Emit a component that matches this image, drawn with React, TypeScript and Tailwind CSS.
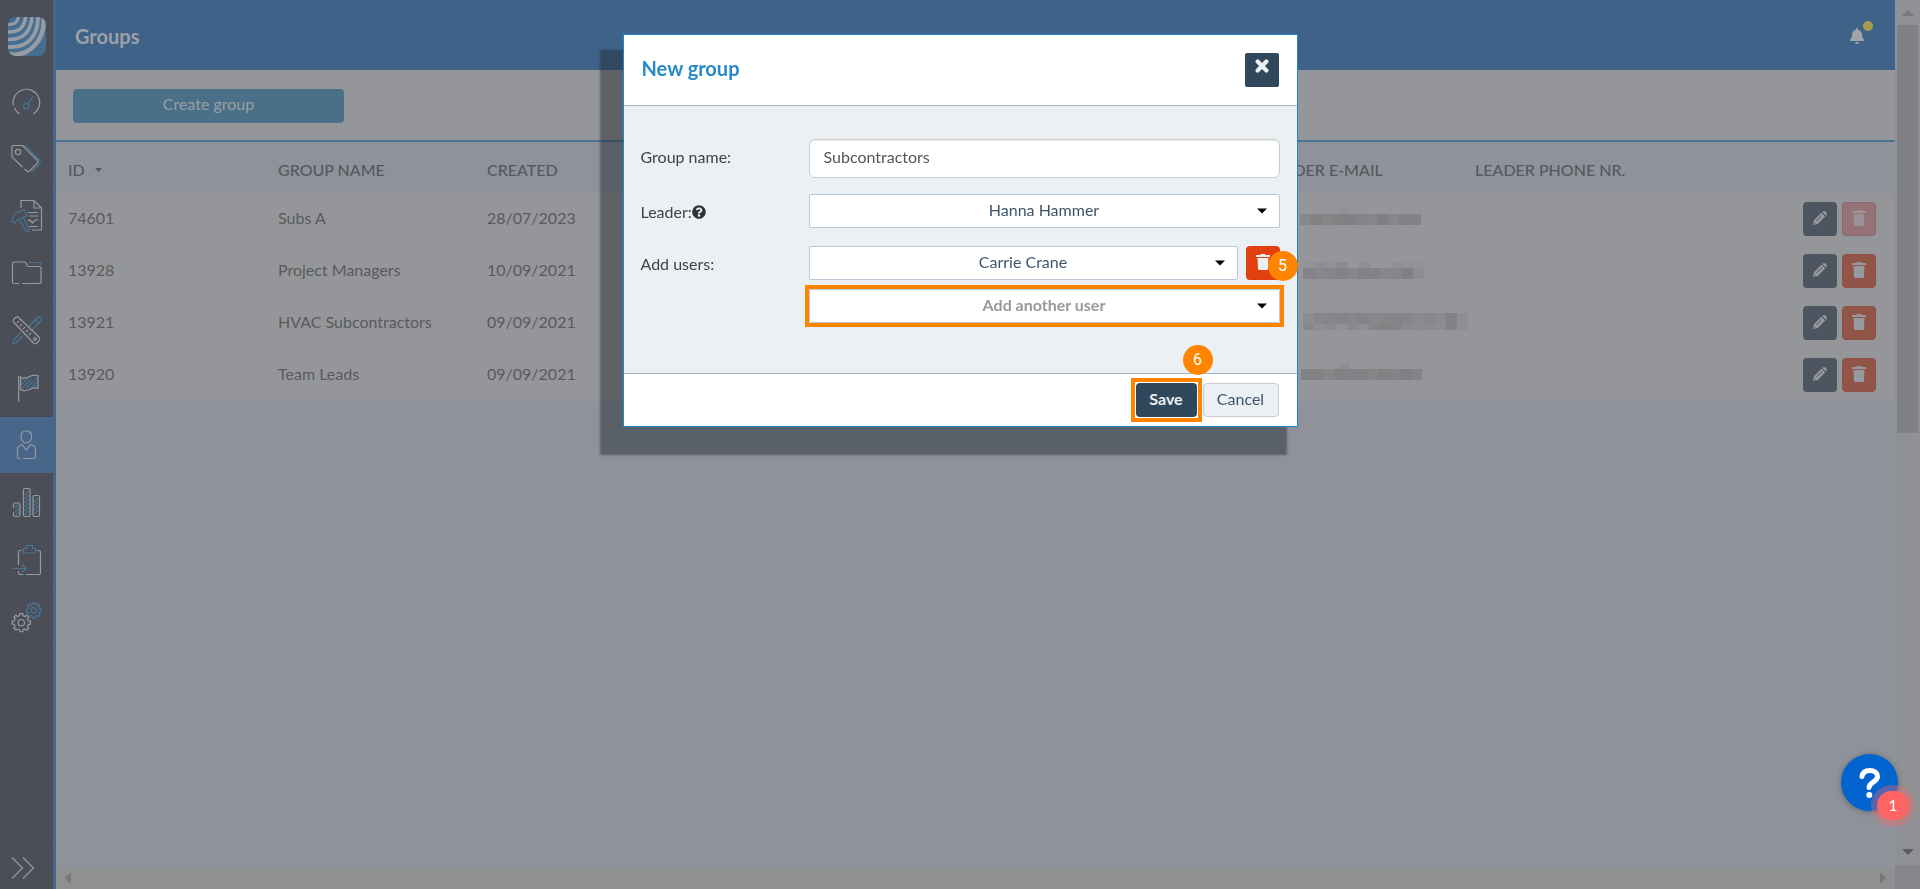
import React, { useState } from 'react';
import { FaBell, FaQuestionCircle } from 'react-icons/fa';

interface Group {
  id: string;
  name: string;
  created: string;
  locked?: boolean;
  mosaic: Band[];
}

interface Band {
  x: number;
  y: number;
  h: number;
  // opacity of each 11px block, left to right
  cells: number[];
}

const GROUPS: Group[] = [
  {
    id: '74601',
    name: 'Subs A',
    created: '28/07/2023',
    locked: true,
    mosaic: [
      { x: 40, y: 0, h: 6, cells: [0.2] },
      { x: 1, y: 6, h: 11, cells: [0.7, 0.9, 0.75, 0.9, 0.95, 0.8, 0.75, 1, 0.7, 0.9, 0.85] },
    ],
  },
  {
    id: '13928',
    name: 'Project Managers',
    created: '10/09/2021',
    mosaic: [
      { x: 5, y: 2, h: 6, cells: [0.1, 0.4, 0.1, 0.5, 0, 0.35, 0, 0, 0.25, 0.1, 0.1] },
      { x: 4, y: 8, h: 11, cells: [0.8, 0.7, 0.75, 0.85, 0.7, 0.85, 0.9, 0.7, 0.75, 1, 0.4] },
    ],
  },
  {
    id: '13921',
    name: 'HVAC Subcontractors',
    created: '09/09/2021',
    mosaic: [
      { x: 4, y: 1, h: 11, cells: [0.4, 0.7, 0.75, 0.8, 0.65, 0.8, 0.7, 0.75, 0.8, 0.75, 0.5, 0.7, 0.5, 0.9, 0.3] },
      { x: 4, y: 12, h: 6, cells: [0.7, 0.3, 0.5, 0.2, 0.6, 0.3, 0.75, 0.9, 0.8, 0.5, 0.4, 0.5, 0.4, 0.9, 0.3] },
    ],
  },
  {
    id: '13920',
    name: 'Team Leads',
    created: '09/09/2021',
    mosaic: [
      { x: 40, y: 0, h: 5, cells: [0.35] },
      { x: 2, y: 5, h: 11, cells: [0.9, 0.95, 0.75, 0.95, 0.85, 0.9, 0.75, 0.9, 0.8, 1, 0.8] },
    ],
  },
];

const LINE = '#9699a0';
const BLUE = '#467596';

// Outline of a cog with eight teeth
function cog(cx: number, cy: number, outer: number, inner: number) {
  const pts: string[] = [];
  for (let i = 0; i < 8; i++) {
    const a = (i * Math.PI) / 4;
    [[-0.24, inner], [-0.17, outer], [0.17, outer], [0.24, inner]].forEach(([d, r]) => {
      pts.push(`${(cx + r * Math.cos(a + d)).toFixed(2)} ${(cy + r * Math.sin(a + d)).toFixed(2)}`);
    });
  }
  return `M${pts.join('L')}Z`;
}

const NAV: { label: string; active?: boolean; icon: React.ReactNode }[] = [
  {
    label: 'Dashboard',
    icon: (
      <>
        <path d="M11.5 31A13.3 13.3 0 0 1 6.5 25M5.4 22.5A13.3 13.3 0 1 1 25.2 31" />
        <g stroke={BLUE}>
          <circle cx="18.3" cy="23.2" r="2.7" />
          <path d="M20 21L25.2 13" />
        </g>
      </>
    ),
  },
  {
    label: 'Tags',
    icon: (
      <>
        <path d="M14.5 27L4 17V6.5L5 5.5H14.5L29.5 20.5Q30.5 21.7 29.5 23L21.5 31Q20.3 31.8 19 31L16.5 29" />
        <circle cx="10" cy="12" r="2.6" />
        <path stroke={BLUE} d="M17 5.5L31.5 20Q33 22 31.5 24L23.5 32" />
      </>
    ),
  },
  {
    label: 'Tenders',
    icon: (
      <>
        <path d="M13 10V2.5H26L33.5 10V32H24M26 2.5V10H33.5M20 14.5H30M21 18H30M19.5 23L22 22L24.5 25L27 22L30 22M21 28.5H30" />
        <path stroke={BLUE} d="M4 23.5L6.5 16L16 11.5L19 18L9.5 21.5L7 25ZM11.5 22L18.5 34L21.5 32.5L15.5 20" />
      </>
    ),
  },
  {
    label: 'Documents',
    icon: (
      <>
        <path d="M11 28.5H6Q4.5 28.5 4.5 27V9Q4.5 7 6.5 7H16.5Q18 7 18.4 9Q18.8 11.5 20.5 11.5H31Q33 11.5 33 13.5V26.5Q33 28.5 31 28.5H14" />
        <path stroke={BLUE} d="M21 7.5H31Q33 7.5 33 10" />
      </>
    ),
  },
  {
    label: 'Tools',
    icon: (
      <>
        <path stroke={BLUE} d="M15 23.5L8.5 30.5L5 32L6 27.5L13 20.5M21 14.5L29 6Q31 4 33 6Q34 8 32.5 9.5L24 18M27.5 7.5L31.5 11.5" />
        <path d="M5.5 10Q4.5 8.5 6 7L8.5 5Q10 4.5 11 6L31 25Q32.5 27 31 29L29 31Q27 32.5 25.5 31ZM9 11L11 9M12 14L14 12M15 17L17 15M18 20L20 18M21 23L23 21" />
        <circle cx="27" cy="27" r="1.4" />
      </>
    ),
  },
  {
    label: 'Milestones',
    icon: (
      <>
        <path
          stroke={BLUE}
          d="M13 11L17 7M13 15L20 8M14 18.5L24 8.5M18 18.5L29 7.5M23 17.5L29 11.5M26 18L29 15"
        />
        <path d="M10.7 32V6M12.5 7Q17 9.5 20.5 7Q25 4.5 30 5.5V18.5Q26 17 22.5 19Q17 22 12.5 19.5Z" />
      </>
    ),
  },
  {
    label: 'Users',
    active: true,
    icon: (
      <path d="M18.3 4C14.5 4 13 6.8 13 9.7C13 13 15.5 16 18.3 16S23.7 13 23.7 9.7C23.7 6.8 22 4 18.3 4ZM12.5 31.5H11Q9.5 31.5 9.5 30V22.5Q9.5 19.5 12 18.5L14 17.5L18.3 23L22.7 17.5L25 18.5Q27.5 19.5 27.5 22.5V30Q27.5 31.5 26 31.5H15" />
    ),
  },
  {
    label: 'Reports',
    icon: (
      <>
        <path stroke={BLUE} d="M7 24L11 20M7 28L11 24M8 31L11 28M17 11L20.5 7M17 15L20.5 11M17 19L20.5 15M17 23L20.5 19M17 27L20.5 23M17 31L20.5 27M26 18L30 14M26 22L30 18M26 26L30 22M26 30L30 26" />
        <path d="M5.5 24V20.5Q5.5 19 7 19H10.5Q12 19 12 20.5V31Q12 32.5 10.5 32.5H7Q5.5 32.5 5.5 31V28" />
        <rect x="15.5" y="4.5" width="6.5" height="28" rx="1.5" />
        <rect x="25" y="11.5" width="6.5" height="21" rx="1.5" />
      </>
    ),
  },
  {
    label: 'Submissions',
    icon: (
      <>
        <path d="M13.5 8.5H12Q10.5 8.5 10.5 10V23M10.5 29V31Q10.5 32.5 12 32.5H15M18 32.5H31Q32.5 32.5 32.5 31V10Q32.5 8.5 31 8.5H29.5" />
        <path stroke={BLUE} d="M15.5 11V6.5H18.5V3.5H24.5V6.5H27.5V11ZM4.5 26.5H18M14 22.5L18 26.5L14 30.5" />
      </>
    ),
  },
  {
    label: 'Settings',
    icon: (
      <>
        <path d={cog(13.3, 23.7, 9.2, 7.2)} />
        <circle cx="13.3" cy="23.7" r="3.2" />
        <g stroke={BLUE}>
          <path d={cog(25.7, 11.3, 7.6, 6)} />
          <circle cx="25.7" cy="11.3" r="2.7" />
        </g>
      </>
    ),
  },
];

function Logo() {
  return (
    <svg width="38" height="39" viewBox="0 0 38 39" className="overflow-hidden rounded-lg bg-[#456e93]" aria-hidden="true">
      <g fill="none" stroke="#989ba1">
        <path strokeWidth="3" d="M0 7.5Q9 8 10.5 0" />
        <path strokeWidth="3.5" d="M0 15Q16 15.500 17.5 0" />
        <path strokeWidth="3.5" d="M0 22.5Q22 23 24 0" />
        <path strokeWidth="4" d="M0 30Q15 31 23 22Q30 14 30 0" />
        <path strokeWidth="4.5" d="M0 37Q15 40 26 29Q37 18 35.5 0" />
      </g>
    </svg>
  );
}

function TrashIcon() {
  return (
    <svg width="14" height="16" viewBox="0 0 14 16" fill="currentColor" aria-hidden="true">
      <path d="M5 0H9L9.5 1H13.5Q14 1 14 1.5V3H0V1.5Q0 1 .5 1H4.5ZM1.5 4H12.5L12 14.5Q11.9 16 10.5 16H3.5Q2.1 16 2 14.5Z" />
    </svg>
  );
}

function PencilIcon() {
  return (
    <svg width="14" height="14" viewBox="0 0 14 14" aria-hidden="true">
      <path fill="currentColor" d="M0 14L1 9L8.5 1.8L12.2 5.5L4.8 13ZM9.3 1L10 .4Q11.2-.4 12.4 .6L13.4 1.6Q14.4 2.8 13.5 4L13 4.7Z" />
      <path stroke="#4d5561" strokeWidth="1" d="M3.2 10.2L8.8 4.7M1.2 11.6L2.4 12.8" />
    </svg>
  );
}

function Mosaic({ bands }: { bands: Band[] }) {
  return (
    <svg width="180" height="22" viewBox="0 0 180 22" className="block" aria-hidden="true">
      {bands.map((b, bi) =>
        b.cells.map((o, i) => (
          <rect key={`${bi}-${i}`} x={b.x + i * 11} y={b.y} width="11" height={b.h} fill="#7f8083" opacity={o} />
        ))
      )}
    </svg>
  );
}

function Caret() {
  return (
    <svg width="10" height="6" viewBox="0 0 10 6" className="pointer-events-none absolute right-[13px] top-1/2 -translate-y-1/2" aria-hidden="true">
      <path d="M0 0.5H10L5 5.5Z" fill="#000" />
    </svg>
  );
}

function Picker({ id, label, value, muted }: { id: string; label?: string; value: string; muted?: boolean }) {
  return (
    <div className="relative flex-1">
      <select
        id={id}
        aria-label={label}
        className={`block h-[34px] w-full appearance-none rounded-xs border border-[#bcc8d4] bg-white px-3 pb-[2px] text-center text-base ${
          muted ? 'font-bold text-[#999999]' : 'text-[#3f5468]'
        }`}
      >
        <option>{value}</option>
      </select>
      <Caret />
    </div>
  );
}

function StepBadge({ n, className }: { n: number; className: string }) {
  return (
    <span className={`absolute grid size-[30px] place-items-center rounded-full bg-[#ff8500] font-['Roboto',sans-serif] text-base text-white ${className}`}>
      {n}
    </span>
  );
}

function Sidebar() {
  return (
    <aside className="flex w-14 shrink-0 flex-col border-r-[3px] border-[#48658a] bg-[#4c4e57]">
      <a href="#home" aria-label="Home" className="flex h-[73px] shrink-0 justify-center pt-[17px]">
        <Logo />
      </a>
      <nav className="grid h-[573px] shrink-0 grid-rows-10">
        {NAV.map((item) => (
          <a
            key={item.label}
            href={`#${item.label.toLowerCase()}`}
            aria-label={item.label}
            className={`flex items-center justify-center border-b border-[#494a52] ${item.active ? 'bg-[#48658a]' : ''}`}
          >
            <svg width="37" height="36" viewBox="0 0 37 36" fill="none" stroke={LINE} strokeWidth="1.2">
              {item.icon}
            </svg>
          </a>
        ))}
      </nav>
      <button aria-label="Expand menu" className="mt-auto flex h-[45px] items-center border-t border-[#494a52] pt-[2px] pl-[11px]">
        <svg width="24" height="24" viewBox="0 0 24 24" fill="none" stroke={LINE} strokeWidth="1.2">
          <path d="M1 1.5L11.5 12L1 22.5M12 1.5L22.5 12L12 22.5" />
        </svg>
      </button>
    </aside>
  );
}

function GroupsTable() {
  return (
    <table className="w-full table-fixed text-left text-base text-[#595a5d]">
      <colgroup>
        <col className="w-[209px]" />
        <col className="w-[209px]" />
        <col className="w-[209px]" />
        <col className="w-[570px]" />
        <col className="w-[209px]" />
        <col className="w-[209px]" />
        <col />
      </colgroup>
      <thead>
        <tr className="h-[51px] text-[#55585d]">
          <th className="pt-1 pl-3 font-medium">
            <span className="flex items-center gap-[10px]">
              ID
              <svg width="7" height="4" viewBox="0 0 7 4" aria-hidden="true">
                <path d="M0 0H7L3.5 4Z" fill="currentColor" />
              </svg>
            </span>
          </th>
          <th className="pt-1 pl-[13px] font-medium">GROUP NAME</th>
          <th className="pt-1 pl-[13px] font-medium">CREATED</th>
          <td />
          <th className="pt-1 pl-3 font-medium whitespace-nowrap">LEADER E-MAIL</th>
          <th className="pt-1 pl-[13px] font-medium whitespace-nowrap">LEADER PHONE NR.</th>
          <td />
        </tr>
      </thead>
      <tbody className="bg-[#959699]">
        {GROUPS.map((g) => (
          <tr key={g.id} className="h-[52px]">
            <td className="pb-[3px] pl-3">{g.id}</td>
            <td className="pb-[3px] pl-[13px]">{g.name}</td>
            <td className="pb-[3px] pl-[13px]">{g.created}</td>
            <td />
            <td className="pl-[46px]">
              <Mosaic bands={g.mosaic} />
            </td>
            <td />
            <td className="pr-[17px]">
              <div className="flex justify-end gap-[5px]">
                <button aria-label={`Edit ${g.name}`} className="grid size-[34px] place-items-center rounded-sm bg-[#4d5561] pb-[2px] text-[#97999f]">
                  <PencilIcon />
                </button>
                <button
                  aria-label={`Delete ${g.name}`}
                  disabled={g.locked}
                  className={`grid size-[34px] place-items-center rounded-sm border pb-[2px] ${
                    g.locked ? 'border-[#8c676c] bg-[#947277] text-[#9a9298]' : 'border-[#8a4f46] bg-[#915547] text-[#9799a0]'
                  }`}
                >
                  <TrashIcon />
                </button>
              </div>
            </td>
          </tr>
        ))}
      </tbody>
    </table>
  );
}

function NewGroupDialog() {
  const [name, setName] = useState('Subcontractors');

  return (
    <div className="fixed inset-0 z-10 flex items-start justify-center pt-[34px]">
      <section
        role="dialog"
        aria-labelledby="dialog-title"
        className="w-[675px] border border-[#2185c9] bg-white shadow-[-17px_22px_2px_6px_rgba(38,46,54,0.5)]"
      >
        <header className="flex h-[71px] items-start justify-between border-b border-[#a3b6c6] pt-[18px] pr-[18px] pl-[18px]">
          <h2 id="dialog-title" className="text-xl leading-[30px] font-bold text-[#2689c9]">
            New group
          </h2>
          <button aria-label="Close" className="flex size-[34px] justify-center rounded-xs bg-[#31475b] pt-[6px] text-[#ebf0f4]">
            <svg width="14" height="14" viewBox="0 0 14 14" fill="none" stroke="currentColor" strokeWidth="4.2" strokeLinecap="round">
              <path d="M2.6 2.6L11.4 11.4M11.4 2.6L2.6 11.4" />
            </svg>
          </button>
        </header>

        <form className="grid h-[267px] grid-cols-[168px_1fr] content-start bg-[#ebf0f4] pt-[33px] pr-[17px] pl-[17px] text-base text-[#3f4347]">
          <label htmlFor="group-name" className="leading-9">
            Group name:
          </label>
          <input
            id="group-name"
            value={name}
            onChange={(e) => setName(e.target.value)}
            className="mb-4 h-[39px] rounded-md border border-[#cccccc] bg-white px-3.5 pb-1 text-[#555555] shadow-[inset_0_1px_1px_rgba(0,0,0,0.075)]"
          />

          <label htmlFor="leader" className="flex items-center pb-4">
            Leader:
            <FaQuestionCircle className="size-3.5 text-[#333333]" />
          </label>
          <div className="mb-[18px] flex">
            <Picker id="leader" value="Hanna Hammer" />
          </div>

          <label htmlFor="user-1" className="leading-9">
            Add users:
          </label>
          <div className="grid gap-[9px]">
            <div className="relative flex gap-2">
              <Picker id="user-1" value="Carrie Crane" />
              <button type="button" aria-label="Remove user" className="flex size-[34px] justify-center rounded-sm bg-[#e2400f] pt-2 text-[#ebf0f4]">
                <TrashIcon />
              </button>
              <StepBadge n={5} className="top-[5px] -right-[18px]" />
            </div>
            <div className="flex outline-4 outline-[#ff8500]">
              <Picker id="user-2" label="Add another user" value="Add another user" muted />
            </div>
          </div>
        </form>

        <footer className="flex h-[53px] items-start justify-end gap-[6px] border-t border-[#a3b6c6] pt-[9px] pr-[18px]">
          <div className="relative outline-4 outline-offset-1 outline-[#ff8500]">
            <button className="block h-[34px] w-[61px] rounded-sm bg-[#31475b] pb-[3px] text-base font-bold text-[#ebf0f4]">Save</button>
            <StepBadge n={6} className="-top-[38px] -right-[16px]" />
          </div>
          <button className="h-[34px] w-[76px] rounded-sm border border-[#cccccc] bg-[#ebf0f4] pb-[3px] text-base text-[#3f5468]">Cancel</button>
        </footer>
      </section>
    </div>
  );
}

function Arrow({ d, className }: { d: string; className?: string }) {
  return (
    <svg width="12" height="12" viewBox="0 0 12 12" fill="currentColor" className={className} aria-hidden="true">
      <path d={d} />
    </svg>
  );
}

export default function App() {
  return (
    <div className="flex h-screen overflow-hidden bg-[#8f929a] font-['Lato',sans-serif]">
      <Sidebar />

      <div className="flex min-w-0 flex-1 flex-col">
        <header className="flex h-[70px] shrink-0 items-center justify-between bg-[#3f6288] pt-[2px] pr-[30px] pl-[19px]">
          <h1 className="text-xl font-bold text-[#9da1a7]">Groups</h1>
          <button aria-label="Notifications" className="relative text-[#a0a3a9]">
            <FaBell className="size-4" />
            <span className="absolute -top-[7px] -right-[8px] size-[10px] rounded-full bg-[#a59b4c]" />
          </button>
        </header>
        <div className="flex h-[72px] shrink-0 items-start border-b-2 border-[#4a738f] bg-[#959699] pt-[19px] pl-[17px]">
          <button className="h-[34px] w-[271px] rounded-sm bg-[#4a6f88] pb-1 text-base text-[#9b9fa4]">Create group</button>
        </div>
        <main className="min-h-0 flex-1 overflow-hidden pr-[2px]">
          <GroupsTable />
        </main>
        <div className="flex h-[22px] shrink-0 items-center justify-between bg-[#8f9092] px-[6px] text-[#77787b]">
          <Arrow d="M9 0V12L3 6Z" />
          <Arrow d="M3 0V12L9 6Z" />
        </div>
      </div>

      {/* Scroll track */}
      <div className="flex w-[25px] shrink-0 flex-col items-center bg-[#909194]">
        <Arrow d="M0 9H12L6 3Z" className="my-[6px] mt-[7px] shrink-0 text-[#77787b]" />
        <div className="h-[408px] w-[21px] bg-[#808184]" />
        <Arrow d="M0 3H12L6 9Z" className="mt-auto mb-[7px] shrink-0 text-[#595b5e]" />
        <div className="h-[24px] w-full shrink-0 bg-[#86878b]" />
      </div>

      <NewGroupDialog />

      <button
        aria-label="Help"
        className="fixed right-[22px] bottom-[78px] z-20 grid size-[57px] place-items-center rounded-full bg-[#0265cf] shadow-[0_1px_6px_rgba(0,0,0,0.3)]"
      >
        <svg width="22" height="30" viewBox="0 0 22 30" fill="none" aria-hidden="true">
          <path d="M3 8.5C3.5 4.5 6.5 2.5 11 2.5C15.5 2.5 18.5 5 18.5 8.5C18.5 14 10.5 13.5 10 19.5" stroke="#fff" strokeWidth="5" strokeLinecap="round" />
          <circle cx="10.3" cy="27" r="3" fill="#fff" />
        </svg>
        <span className="absolute -right-[11px] -bottom-[9px] grid h-[29px] w-[32px] place-items-center rounded-full bg-[#ff6464] pb-[2px] text-base text-white shadow-[0_0_0_6px_rgba(255,100,100,0.35)]">
          1
        </span>
      </button>
    </div>
  );
}
